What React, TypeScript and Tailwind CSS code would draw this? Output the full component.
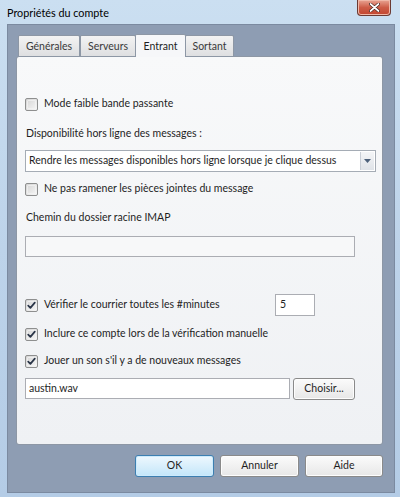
import type { ReactNode } from 'react'

const FONT = { fontFamily: 'Lato, "Open Sans", sans-serif' }

function Checkbox({ checked = false }: { checked?: boolean }) {
  return (
    <span className="relative flex h-[13px] w-[13px] shrink-0 items-center justify-center rounded-[2px] border border-[#8e8f8f] bg-gradient-to-br from-[#d4d4d4] to-[#f7f7f7]">
      <span className="absolute inset-[1px] rounded-[1px] border border-[#f4f4f4]/70" />
      {checked && (
        <svg width="9" height="9" viewBox="0 0 9 9" className="relative">
          <path d="M1.2 4.6 L3.4 6.9 L7.8 1.6" fill="none" stroke="#2a3548" strokeWidth="1.7" strokeLinecap="round" strokeLinejoin="round" />
        </svg>
      )}
    </span>
  )
}

function CheckRow({ label, checked, className = '', children }: { label: string; checked?: boolean; className?: string; children?: ReactNode }) {
  return (
    <div className={`flex items-center ${className}`}>
      <Checkbox checked={checked} />
      <span className="ml-[6px] text-[#1e1e1e]">{label}</span>
      {children}
    </div>
  )
}

function Tab({ label, active = false, w }: { label: string; active?: boolean; w: string }) {
  if (active) {
    return (
      <div className={`${w} relative z-10 -mx-[1px] -mb-[1px] flex h-[23px] items-start justify-center rounded-t-[2px] border border-b-0 border-[#8d97a5] bg-[#f6f7f9] pt-[4px] text-[#1e1e1e]`}>
        {label}
      </div>
    )
  }
  return (
    <div className={`${w} mt-[1px] flex h-[21px] items-start justify-center rounded-t-[2px] border border-b-0 border-[#8d97a5] bg-gradient-to-b from-[#f3f3f3] to-[#dedfe1] pt-[3px] text-[#3a3a3a]`}>
      {label}
    </div>
  )
}

function Button({ label, primary = false, className = '' }: { label: string; primary?: boolean; className?: string }) {
  return (
    <div
      className={`flex h-[22px] items-center justify-center rounded-[3px] border text-[#1e1e1e] ${
        primary
          ? 'border-[#3c7fb1] bg-gradient-to-b from-[#eef8fe] to-[#c3e6f9] shadow-[inset_0_0_0_1px_#cdeafb]'
          : 'border-[#8a8a8a] bg-gradient-to-b from-[#fbfbfb] to-[#e7e7e7] shadow-[inset_0_0_0_1px_#fdfdfd]'
      } ${className}`}
    >
      {label}
    </div>
  )
}

export default function App() {
  return (
    <div style={FONT} className="flex h-[497px] w-[400px] flex-col overflow-hidden bg-gradient-to-b from-[#cbdff1] via-[#bdd3ea] to-[#b4cce6] text-[10.5px]">
      {/* title bar */}
      <div className="relative flex h-[24px] shrink-0 items-center pl-[7px] pt-[2px]">
        <span className="text-[10.8px] text-black">Propriétés du compte</span>
        <div className="absolute right-[9px] top-0 flex h-[16px] w-[34px] items-center justify-center rounded-b-[4px] border border-t-0 border-[#6b3a33] bg-gradient-to-b from-[#e8a493] via-[#cd5c47] to-[#c2452f] shadow-[inset_0_0_0_1px_#f0b8a8]">
          <svg width="11" height="9" viewBox="0 0 11 9">
            <path d="M1.5 1 L9.5 8 M9.5 1 L1.5 8" stroke="#3c1d18" strokeWidth="3" strokeLinecap="round" />
            <path d="M1.5 1 L9.5 8 M9.5 1 L1.5 8" stroke="#ffffff" strokeWidth="1.7" strokeLinecap="round" />
          </svg>
        </div>
      </div>

      {/* client area */}
      <div className="mb-[5px] ml-[7px] mr-[5px] flex flex-1 flex-col border border-[#7b8aa0] bg-[#8e9db3] pb-[15px] pl-[8px] pr-[11px] pt-[9px]">
        <div className="flex pl-[2px]">
          <Tab label="Générales" w="w-[62px]" />
          <Tab label="Serveurs" w="w-[56px]" />
          <Tab label="Entrant" active w="w-[51px]" />
          <Tab label="Sortant" w="w-[49px]" />
        </div>

        <div className="flex h-[389px] flex-col rounded-[3px] border border-[#8d97a5] bg-gradient-to-b from-[#f8f9fa] to-[#eff1f4] pl-[8px] text-[#1e1e1e]">
          <CheckRow label="Mode faible bande passante" className="mt-[37px] h-[20px]" />

          <div className="mt-[10px] flex h-[20px] items-center pl-[1px]">Disponibilité hors ligne des messages :</div>

          <div className="mt-[6px] flex h-[22px] w-[351px] items-center border border-[#a5acb5] bg-white pl-[3px]">
            <span className="flex-1 whitespace-nowrap">Rendre les messages disponibles hors ligne lorsque je clique dessus</span>
            <span className="mr-[1px] flex h-[18px] w-[14px] items-center justify-center border-l border-[#c9ced6] bg-gradient-to-b from-[#f4f5f7] to-[#dfe3e8]">
              <svg width="7" height="4" viewBox="0 0 7 4">
                <path d="M0 0 H7 L3.5 4 Z" fill="#4c607a" />
              </svg>
            </span>
          </div>

          <CheckRow label="Ne pas ramener les pièces jointes du message" className="mt-[7px] h-[20px]" />

          <div className="mt-[9px] flex h-[20px] items-center pl-[1px]">Chemin du dossier racine IMAP</div>

          <div className="mt-[8px] h-[21px] w-[330px] border border-[#abadb3] bg-[#f7f8f9]" />

          <CheckRow label="Vérifier le courrier toutes les #minutes" checked className="mt-[37px] h-[22px]">
            <div className="ml-auto mr-[67px] flex h-[22px] w-[40px] items-center border border-[#abadb3] bg-white pl-[4px]">5</div>
          </CheckRow>

          <CheckRow label="Inclure ce compte lors de la vérification manuelle" checked className="mt-[8px] h-[20px]" />

          <CheckRow label="Jouer un son s'il y a de nouveaux messages" checked className="mt-[7px] h-[20px]" />

          <div className="mt-[7px] flex h-[21px]">
            <div className="flex w-[265px] items-center border border-[#abadb3] bg-white pl-[3px]">austin.wav</div>
            <Button label="Choisir..." className="ml-[3px] h-[21px] w-[62px]" />
          </div>
        </div>

        <div className="mt-[10px] flex justify-end gap-[6px]">
          <Button label="OK" primary className="w-[79px]" />
          <Button label="Annuler" className="w-[79px]" />
          <Button label="Aide" className="w-[78px]" />
        </div>
      </div>
    </div>
  )
}
